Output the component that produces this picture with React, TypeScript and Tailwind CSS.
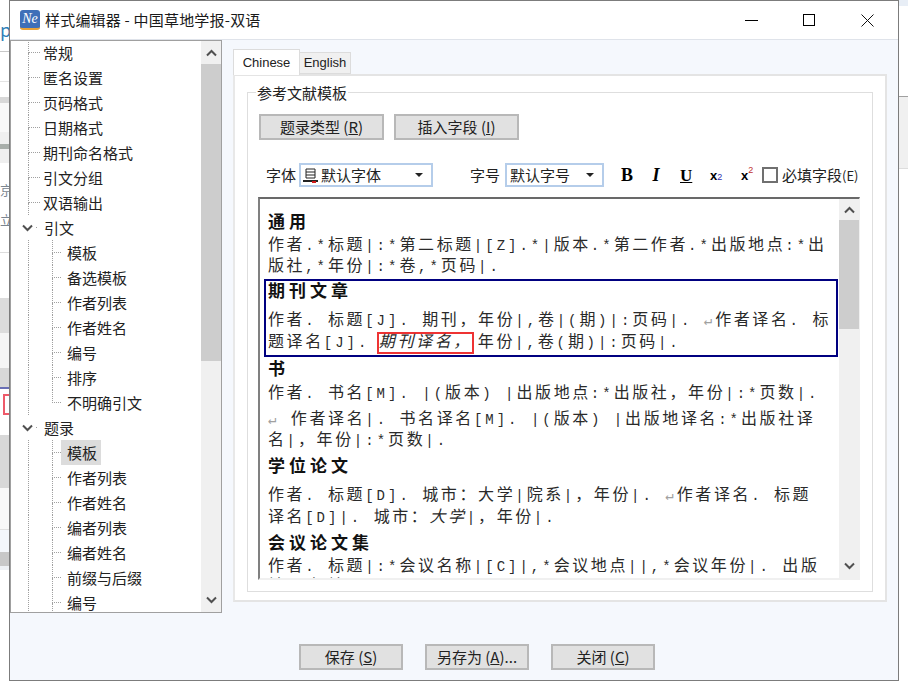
import type { ReactNode } from "react";

const uiFont = "font-['Noto_Sans_CJK_SC','Noto_Sans',sans-serif]";
const editorFont = "font-['Liberation_Mono','Noto_Sans_CJK_SC',monospace]";

type TreeItem = {
  label: string;
  kind: "root" | "branch" | "child" | "last";
  selected?: boolean;
};

const treeItems: TreeItem[] = [
  { label: "常规", kind: "root" },
  { label: "匿名设置", kind: "root" },
  { label: "页码格式", kind: "root" },
  { label: "日期格式", kind: "root" },
  { label: "期刊命名格式", kind: "root" },
  { label: "引文分组", kind: "root" },
  { label: "双语输出", kind: "root" },
  { label: "引文", kind: "branch" },
  { label: "模板", kind: "child" },
  { label: "备选模板", kind: "child" },
  { label: "作者列表", kind: "child" },
  { label: "作者姓名", kind: "child" },
  { label: "编号", kind: "child" },
  { label: "排序", kind: "child" },
  { label: "不明确引文", kind: "last" },
  { label: "题录", kind: "branch" },
  { label: "模板", kind: "child", selected: true },
  { label: "作者列表", kind: "child" },
  { label: "作者姓名", kind: "child" },
  { label: "编者列表", kind: "child" },
  { label: "编者姓名", kind: "child" },
  { label: "前缀与后缀", kind: "child" },
  { label: "编号", kind: "child" },
];

function Chevron({ up, className }: { up?: boolean; className?: string }) {
  return (
    <svg width="11" height="8" viewBox="0 0 11 8" className={className}>
      <polyline
        points={up ? "1,6.5 5.5,2 10,6.5" : "1,1.5 5.5,6 10,1.5"}
        fill="none"
        stroke="#505050"
        strokeWidth="2"
      />
    </svg>
  );
}

function Guide({ width, last }: { width: string; last?: boolean }) {
  return (
    <div className={`flex h-full flex-col ${width}`}>
      <div className="h-1/2 border-b border-l border-dotted border-[#a0a0a0]" />
      <div className={`h-1/2 border-dotted border-[#a0a0a0] ${last ? "" : "border-l"}`} />
    </div>
  );
}

function TreeRow({ item }: { item: TreeItem }) {
  if (item.kind === "branch") {
    return (
      <div className="flex h-[25px] shrink-0 items-center">
        <Chevron className="ml-[11px] mr-[3px]" />
        <span className="h-px w-px bg-[#a0a0a0]" />
        <span className="ml-[7px] leading-[25px]">{item.label}</span>
      </div>
    );
  }

  if (item.kind === "root") {
    return (
      <div className="flex h-[25px] shrink-0 items-center pl-[17px]">
        <Guide width="w-[12px]" />
        <span className="ml-[3px] leading-[25px]">{item.label}</span>
      </div>
    );
  }

  return (
    <div className="flex h-[25px] shrink-0 items-center pl-[17px]">
      <div className="h-full w-[24px] border-l border-dotted border-[#a0a0a0]" />
      <Guide width="w-[9px]" last={item.kind === "last"} />
      <span
        className={`pl-[6px] pr-[4px] leading-[25px] ${item.selected ? "bg-[#dcdcdc]" : ""}`}
      >
        {item.label}
      </span>
    </div>
  );
}

function ScrollBar({ thumbTop, thumbHeight }: { thumbTop: string; thumbHeight: string }) {
  return (
    <div className="flex h-full w-[20px] shrink-0 flex-col items-center bg-[#f0f0f0]">
      <div className={`flex w-full shrink-0 items-center justify-center ${thumbTop}`}>
        <Chevron up />
      </div>
      <div className={`w-full shrink-0 bg-[#cdcdcd] ${thumbHeight}`} />
      <div className="flex-1" />
      <div className="flex h-[24px] w-full shrink-0 items-center justify-center">
        <Chevron />
      </div>
    </div>
  );
}

function DialogButton({ width, children }: { width: string; children: ReactNode }) {
  return (
    <button
      type="button"
      className={`flex h-[26px] items-center justify-center border-2 border-[#b8b8b8] bg-[#e1e1e1] text-[15px] text-[#222] ${width}`}
    >
      {children}
    </button>
  );
}

function Combo({ width, children }: { width: string; children: ReactNode }) {
  return (
    <div
      className={`flex h-[24px] items-center border-2 border-[#b5cdea] bg-white pr-[8px] text-[15px] text-[#222] ${width}`}
    >
      {children}
      <span className="ml-auto h-0 w-0 border-x-[4px] border-t-[4px] border-x-transparent border-t-[#222]" />
    </div>
  );
}

// latin and punctuation sit smaller than the CJK glyphs, as in the template editor
function Mixed({ text }: { text: string }) {
  return (
    <>
      {text.split(/([\u2E80-\u9FFF\uFF00-\uFFEF]+)/).map((run, index) => {
        if (!run) {
          return null;
        }
        if (index % 2 === 1) {
          return <span key={index}>{run}</span>;
        }
        return (
          <span key={index} className="text-[14px] tracking-[3px]">
            {run.split("↵").map((part, partIndex) => (
              <span key={partIndex}>
                {partIndex > 0 && <span className="text-[#a0a0a0]">↵</span>}
                {part}
              </span>
            ))}
          </span>
        );
      })}
    </>
  );
}

function BodyLine({ className, children }: { className: string; children: ReactNode }) {
  return (
    <div className={`h-[22px] shrink-0 whitespace-nowrap leading-[22px] ${className}`}>
      {children}
    </div>
  );
}

function Heading({ className, children }: { className: string; children: ReactNode }) {
  return (
    <div
      className={`h-[22px] shrink-0 whitespace-nowrap text-[17px] font-bold leading-[22px] tracking-[4px] text-[#111] ${className}`}
    >
      {children}
    </div>
  );
}

function LeftStrip() {
  return (
    <div className="flex h-full w-[9px] shrink-0 flex-col overflow-hidden bg-white text-[18px] leading-none text-[#2f7fb8]">
      <div className="h-[52px] shrink-0 border-b border-[#c8c8c8] pt-[20px]">p</div>
      <div className="h-[30px] shrink-0 border-b border-[#e4e4e4]" />
      <div className="h-[15px] shrink-0" />
      <div className="h-[6px] shrink-0 bg-[#d8d8d8]" />
      <div className="h-[29px] shrink-0 bg-[#f8f8f8]" />
      <div className="h-[12px] shrink-0 bg-[#efefef]" />
      <div className="h-[5px] shrink-0 bg-[#a8aeaa]" />
      <div className="h-[14px] shrink-0 bg-[#efefef]" />
      <div className="h-[90px] shrink-0 border-b border-[#dddddd] pt-[12px] text-[13px] leading-[30px] text-[#7a8590]">
        <div>京</div>
        <div>立</div>
      </div>
      <div className="h-[45px] shrink-0" />
      <div className="h-[35px] shrink-0 bg-[#dcdcdc]" />
      <div className="h-[35px] shrink-0 bg-[#f5f5f5]" />
      <div className="h-[19px] shrink-0 bg-[#d8d8d8]" />
      <div className="h-[2px] shrink-0 bg-[#6a6fb5]" />
      <div className="h-[5px] shrink-0" />
      <div className="ml-[3px] h-[21px] shrink-0 border-y-2 border-l-2 border-[#ee5a6a]" />
      <div className="h-[20px] shrink-0" />
      <div className="h-[53px] shrink-0 bg-[#d8d8d8]" />
      <div className="h-[42px] shrink-0 border-b border-[#e0e0e0] bg-[#f8f8f8]" />
      <div className="h-[22px] shrink-0 bg-[#f4f7fb]" />
      <div className="h-[14px] shrink-0 bg-[#c8c8c8]" />
      <div className="h-[4px] shrink-0 bg-[#eef1f5]" />
    </div>
  );
}

function RightStrip() {
  return (
    <div className="flex h-full flex-1 flex-col bg-white">
      <div className="h-[6px] bg-[#e8eef6]" />
      <div className="h-[90px]" />
      <div className="h-[73px] border-y border-t-[#a0a0a0] border-b-[#dddddd] bg-[#f0f0f0]" />
    </div>
  );
}

export default function App() {
  return (
    <div className={`flex h-[690px] w-[908px] overflow-hidden bg-white ${uiFont}`}>
      <LeftStrip />

      <div className="flex h-[681px] w-[890px] shrink-0 flex-col border border-[#7c7c7c] bg-[#f5f8fd]">
        <div className="flex h-[38px] shrink-0 items-center bg-white">
          <div className="ml-[10px] flex h-[20px] w-[20px] items-center justify-center overflow-hidden rounded-[3px] border-b-2 border-b-[#e8a23a] bg-[#3f6fb8] font-['Liberation_Serif',serif] text-[14px] italic leading-none text-white">
            Ne
          </div>
          <span className="ml-[5px] whitespace-nowrap text-[15px] tracking-[0.2px] text-[#1a1a1a]">
            样式编辑器 - 中国草地学报-双语
          </span>
          <div className="ml-auto flex h-full items-center">
            <span className="h-px w-[13px] bg-black" />
            <span className="ml-[45px] h-[12px] w-[12px] border border-black" />
            <svg width="13" height="13" viewBox="0 0 13 13" className="ml-[46px] mr-[24px]">
              <path d="M0.5 0.5 L12.5 12.5 M12.5 0.5 L0.5 12.5" stroke="#111" fill="none" />
            </svg>
          </div>
        </div>

        <div className="flex h-[574px] shrink-0 border-t border-[#dfe3ea]">
          <div className="flex h-full w-[212px] shrink-0 border border-[#a0a0a0] bg-white text-[15px] text-[#222]">
            <div className="flex h-full flex-1 flex-col overflow-hidden">
              <div className="-mt-px flex flex-col">
                {treeItems.map((item, index) => (
                  <TreeRow key={index} item={item} />
                ))}
              </div>
            </div>
            <ScrollBar thumbTop="h-[23px]" thumbHeight="h-[297px]" />
          </div>

          <div className="ml-[11px] flex w-[654px] shrink-0 flex-col pt-[9px]">
            <div className="flex h-[25px] items-end">
              <div className="relative z-10 -mb-px flex h-[26px] w-[67px] items-center justify-center border border-b-0 border-[#dcdcdc] bg-white font-['Liberation_Sans',sans-serif] text-[13px] text-[#222]">
                Chinese
              </div>
              <div className="flex h-[22px] w-[51px] items-center justify-center border border-l-0 border-[#dcdcdc] bg-[#f0f0f0] font-['Liberation_Sans',sans-serif] text-[13px] text-[#222]">
                English
              </div>
            </div>

            <div className="h-[528px] w-[654px] border-2 border-[#e4e4e4] border-l-[#e8e8e8] bg-white pl-[12px] pt-[16px]">
              <div className="h-[500px] w-[626px] border border-[#dedede]">
                <div className="-mt-[10px] ml-[8px] w-fit bg-white px-px text-[15px] leading-[20px] text-[#222]">
                  参考文献模板
                </div>

                <div className="ml-[11px] mt-[11px] flex gap-[10px]">
                  <DialogButton width="w-[125px]">
                    题录类型&nbsp;(<span className="underline">R</span>)
                  </DialogButton>
                  <DialogButton width="w-[125px]">
                    插入字段&nbsp;(<span className="underline">I</span>)
                  </DialogButton>
                </div>

                <div className="mt-[23px] flex h-[24px] items-center text-[15px] text-[#222]">
                  <span className="ml-[18px] w-[33px]">字体</span>
                  <Combo width="w-[134px]">
                    <svg width="17" height="17" viewBox="0 0 17 17" className="ml-[1px]">
                      <path d="M4 2 H13 V11 H4Z M4 5 H13 M4 8 H13" fill="none" stroke="#222" />
                      <path d="M1 14 H16" stroke="#222" strokeWidth="2" />
                      <path d="M10 15 H14" stroke="#d01818" strokeWidth="2" />
                    </svg>
                    <span className="ml-[2px]">默认字体</span>
                  </Combo>
                  <span className="ml-[37px] w-[35px]">字号</span>
                  <Combo width="w-[99px]">
                    <span className="ml-[3px]">默认字号</span>
                  </Combo>
                  <span className="ml-[17px] w-[12px] text-center font-['Liberation_Serif',serif] text-[18px] font-bold leading-none text-black">
                    B
                  </span>
                  <span className="ml-[17px] w-[12px] text-center font-['Liberation_Serif',serif] text-[18px] font-bold italic leading-none text-black">
                    I
                  </span>
                  <span className="ml-[18px] w-[12px] text-center font-['Liberation_Serif',serif] text-[17px] font-bold leading-none text-black underline">
                    U
                  </span>
                  <span className="ml-[18px] flex w-[14px] items-end font-['Liberation_Sans',sans-serif] text-[13px] font-bold leading-none text-black">
                    x<span className="text-[9px] font-normal text-[#3030b0]">2</span>
                  </span>
                  <span className="ml-[17px] flex w-[14px] items-start font-['Liberation_Sans',sans-serif] text-[13px] font-bold leading-none text-black">
                    x<span className="-mt-[3px] text-[9px] font-normal text-[#c03030]">2</span>
                  </span>
                  <span className="ml-[7px] h-[16px] w-[16px] border-2 border-[#707070] bg-white" />
                  <span className="ml-[4px] whitespace-nowrap">
                    必填字段<span className="text-[13px]">(E)</span>
                  </span>
                </div>

                <div className="ml-[10px] mt-[10px] flex h-[383px] w-[602px] border-b-2 border-l-2 border-r border-t-2 border-b-[#f0f0f0] border-l-[#808080] border-r-[#f0f0f0] border-t-[#696969] bg-white">
                  <div
                    className={`flex h-full w-[579px] shrink-0 flex-col overflow-hidden pl-[8px] text-[16px] tracking-[2.6px] text-[#2a2a2a] ${editorFont}`}
                  >
                    <Heading className="mt-[14px]">通用</Heading>
                    <BodyLine className="">
                      <Mixed text="作者.*标题|:*第二标题|[Z].*|版本.*第二作者.*出版地点:*出" />
                    </BodyLine>
                    <BodyLine className="-mt-px">
                      <Mixed text="版社,*年份|:*卷,*页码|." />
                    </BodyLine>

                    <div className="-ml-[4px] mt-[1px] h-[78px] w-[574px] shrink-0 border-2 border-[#000080] pl-[2px]">
                      <Heading className="mt-px">期刊文章</Heading>
                      <BodyLine className="mt-[6px]">
                        <Mixed text="作者. 标题[J]. 期刊，年份|,卷|(期)|:页码|. ↵作者译名. 标" />
                      </BodyLine>
                      <BodyLine className="">
                        <Mixed text="题译名[J]. " />
                        <span className="-ml-[4px] mr-[4px] inline-block border-2 border-[#ee3333] italic leading-[18px]">
                          期刊译名，
                        </span>
                        <Mixed text="年份|,卷(期)|:页码|." />
                      </BodyLine>
                    </div>

                    <Heading className="mt-[3px]">书</Heading>
                    <BodyLine className="mt-px">
                      <Mixed text="作者. 书名[M]. |(版本) |出版地点:*出版社，年份|:*页数|." />
                    </BodyLine>
                    <BodyLine className="mt-[4px]">
                      <Mixed text="↵ 作者译名|. 书名译名[M]. |(版本) |出版地译名:*出版社译" />
                    </BodyLine>
                    <BodyLine className="-mt-px">
                      <Mixed text="名|，年份|:*页数|." />
                    </BodyLine>
                    <Heading className="mt-[5px]">学位论文</Heading>
                    <BodyLine className="mt-[6px]">
                      <Mixed text="作者. 标题[D]. 城市：大学|院系|，年份|. ↵作者译名. 标题" />
                    </BodyLine>
                    <BodyLine className="">
                      <Mixed text="译名[D]|. 城市：" />
                      <span className="italic">大学</span>
                      <Mixed text="|，年份|." />
                    </BodyLine>
                    <Heading className="mt-[5px]">会议论文集</Heading>
                    <BodyLine className="">
                      <Mixed text="作者. 标题|:*会议名称|[C]|,*会议地点||,*会议年份|. 出版" />
                    </BodyLine>
                    <BodyLine className="-mt-[2px]">
                      <Mixed text="社. 起始页码" />
                    </BodyLine>
                  </div>
                  <ScrollBar thumbTop="h-[21px]" thumbHeight="h-[109px]" />
                </div>
              </div>
            </div>
          </div>
        </div>

        <div className="ml-[289px] mt-[31px] flex gap-[22px]">
          <DialogButton width="w-[104px]">
            保存&nbsp;(<span className="underline">S</span>)
          </DialogButton>
          <DialogButton width="w-[104px]">
            另存为&nbsp;(<span className="underline">A</span>)...
          </DialogButton>
          <DialogButton width="w-[104px]">
            关闭&nbsp;(<span className="underline">C</span>)
          </DialogButton>
        </div>
      </div>

      <RightStrip />
    </div>
  );
}
